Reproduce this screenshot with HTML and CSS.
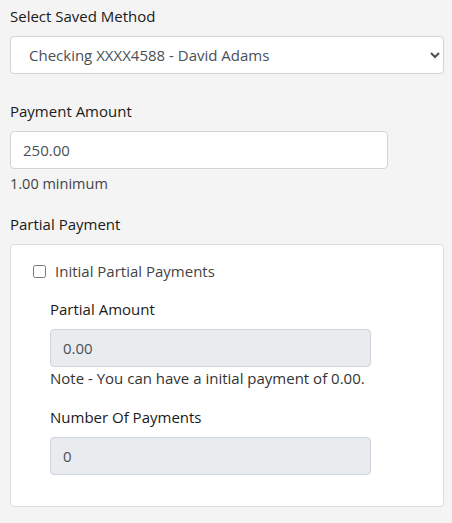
FILE: index.html
```html
<!DOCTYPE html>
<html>
<head>
<meta charset="utf-8">
<link rel="stylesheet" href="styles.css">
</head>
<body>
<div class="page">
  <div class="group">
    <label class="lbl">Select Saved Method</label>
    <select class="ctl sel">
      <option>Checking XXXX4588 - David Adams</option>
    </select>
  </div>
  <div class="group">
    <label class="lbl">Payment Amount</label>
    <input class="ctl amt" type="text" value="250.00">
    <div class="hint">1.00 minimum</div>
  </div>
  <div class="partial">
    <label class="lbl">Partial Payment</label>
    <div class="card">
      <label class="check"><input type="checkbox"><span>Initial Partial Payments</span></label>
      <div class="inner">
        <label class="lbl">Partial Amount</label>
        <input class="ctl dis" type="text" value="0.00" disabled>
        <div class="note">Note - You can have a initial payment of 0.00.</div>
        <label class="lbl lbl2">Number Of Payments</label>
        <input class="ctl dis" type="text" value="0" disabled>
      </div>
    </div>
  </div>
</div>
</body>
</html>
```
FILE: styles.css
```css
html, body {
  margin: 0;
  padding: 0;
  background: #f4f4f4;
}
body {
  font-family: "Open Sans", "Liberation Sans", sans-serif;
  color: #212529;
}
.page {
  padding: 4px 8px 0 10px;
}
.group {
  margin-bottom: 25px;
}
.lbl {
  display: block;
  font-size: 15px;
  font-weight: 500;
  line-height: 24px;
  margin-bottom: 8px;
  color: #1a1a1a;
}
.ctl {
  display: block;
  box-sizing: border-box;
  height: 38px;
  font-family: inherit;
  font-size: 15px;
  color: #495057;
  background: #fff;
  border: 1px solid #ced4da;
  border-radius: 4px;
  padding: 0 12px;
  margin: 0;
}
.sel {
  width: 434px;
  padding-left: 14px;
}
.amt {
  width: 378px;
}
.hint {
  margin-top: 5px;
  font-size: 14.5px;
  line-height: 20px;
  color: #444;
}
.group:nth-child(2) {
  margin-bottom: 18px;
}
.card {
  background: #fff;
  border: 1px solid #ddd;
  border-radius: 4px;
  width: 434px;
  box-sizing: border-box;
  padding: 14px 20px 31px 21px;
}
.check {
  display: flex;
  align-items: center;
  font-size: 15px;
  line-height: 24px;
  color: #444;
}
.check input {
  margin: 0 9px 0 1px;
  width: 13px;
  height: 13px;
}
.inner {
  padding-left: 18px;
  margin-top: 14px;
}
.dis {
  width: 321px;
  background: #e9ecef;
}
.note {
  margin-top: 1px;
  font-size: 15px;
  line-height: 20px;
  color: #333;
}
.lbl2 {
  margin-top: 17px;
}
```
